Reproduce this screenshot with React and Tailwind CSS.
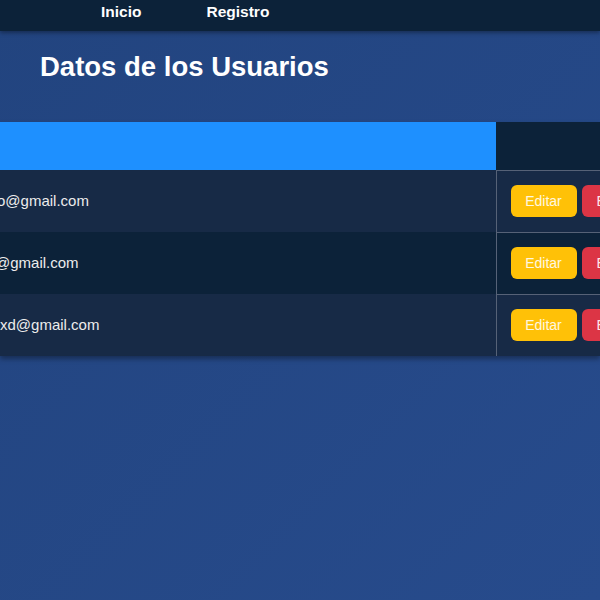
export default function App() {
  const rows = [
    { email: "o@gmail.com", shift: "-ml-[3px]", bg: "bg-[#172a46]" },
    { email: "@gmail.com", shift: "-ml-[5px]", bg: "bg-[#0c2239]" },
    { email: "xd@gmail.com", shift: "ml-0", bg: "bg-[#172a46]" },
  ];

  return (
    <div className="min-h-screen bg-gradient-to-br from-[#22447f] to-[#274b8c] font-['Liberation_Sans',Arial,sans-serif] text-white">
      {/* Navbar */}
      <nav className="h-[31px] bg-[#0c2239] flex items-center pl-[101px] gap-[65px] shadow-[0_2px_4px_rgba(0,0,0,0.35)] relative z-10">
        <a className="text-[15.5px] font-bold leading-none -mt-[7px]">Inicio</a>
        <a className="text-[15.5px] font-bold leading-none -mt-[7px]">Registro</a>
      </nav>

      <main>
        <h1 className="pl-[40px] pt-[20px] text-[27.5px] leading-[32px] font-bold">Datos de los Usuarios</h1>

        <div className="mt-[39px] overflow-hidden shadow-[0_3px_5px_rgba(0,0,0,0.35)]">
          <table className="table-fixed w-[700px] border-collapse">
            <thead>
              <tr className="h-[48px]">
                <th className="w-[496px] bg-[#1e90ff]"></th>
                <th className="w-[204px] bg-[#0c2239]"></th>
              </tr>
            </thead>
            <tbody>
              {rows.map((r, i) => (
                <tr key={i} className={`h-[62px] ${r.bg}`}>
                  <td className="p-0 align-middle">
                    <span className={`block text-[15px] text-[#ececec] ${r.shift}`}>{r.email}</span>
                  </td>
                  <td className="border-l border-t border-[#566277] pl-[14px] align-middle">
                    <div className="flex gap-[5px]">
                      <button className="h-[32px] w-[66px] rounded-[6px] bg-[#ffc107] text-[14px] text-[#fff8e0]">Editar</button>
                      <button className="h-[32px] w-[76px] rounded-[6px] bg-[#dc3545] text-[14px] text-[#ffe8ea] text-left pl-[15px]">Eliminar</button>
                    </div>
                  </td>
                </tr>
              ))}
            </tbody>
          </table>
        </div>
      </main>
    </div>
  );
}
